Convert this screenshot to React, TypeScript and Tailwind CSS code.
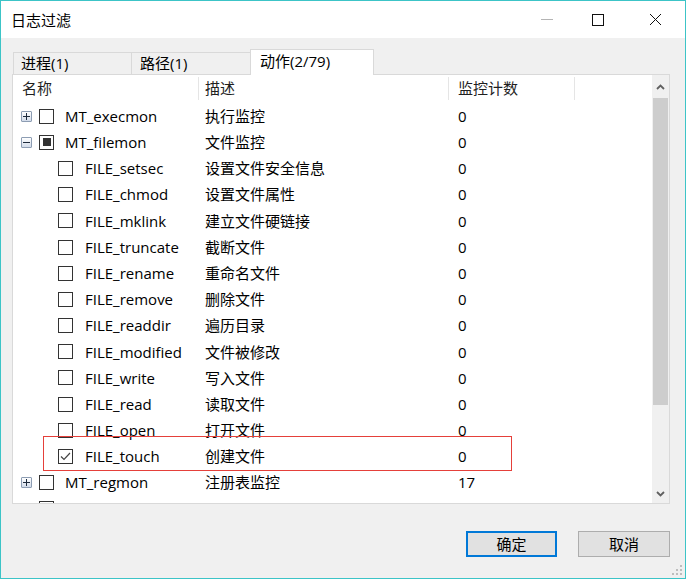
import React from 'react'

type Row = {
  level: 0 | 1
  open?: boolean
  check: 'none' | 'part' | 'on'
  name: string
  desc: string
  count: string
}

const rows: Row[] = [
  { level: 0, open: false, check: 'none', name: 'MT_execmon', desc: '执行监控', count: '0' },
  { level: 0, open: true, check: 'part', name: 'MT_filemon', desc: '文件监控', count: '0' },
  { level: 1, check: 'none', name: 'FILE_setsec', desc: '设置文件安全信息', count: '0' },
  { level: 1, check: 'none', name: 'FILE_chmod', desc: '设置文件属性', count: '0' },
  { level: 1, check: 'none', name: 'FILE_mklink', desc: '建立文件硬链接', count: '0' },
  { level: 1, check: 'none', name: 'FILE_truncate', desc: '截断文件', count: '0' },
  { level: 1, check: 'none', name: 'FILE_rename', desc: '重命名文件', count: '0' },
  { level: 1, check: 'none', name: 'FILE_remove', desc: '删除文件', count: '0' },
  { level: 1, check: 'none', name: 'FILE_readdir', desc: '遍历目录', count: '0' },
  { level: 1, check: 'none', name: 'FILE_modified', desc: '文件被修改', count: '0' },
  { level: 1, check: 'none', name: 'FILE_write', desc: '写入文件', count: '0' },
  { level: 1, check: 'none', name: 'FILE_read', desc: '读取文件', count: '0' },
  { level: 1, check: 'none', name: 'FILE_open', desc: '打开文件', count: '0' },
  { level: 1, check: 'on', name: 'FILE_touch', desc: '创建文件', count: '0' },
  { level: 0, open: false, check: 'none', name: 'MT_regmon', desc: '注册表监控', count: '17' },
  // next row is scrolled past the bottom edge, only its glyph tops show
  { level: 0, open: false, check: 'none', name: '', desc: '', count: '' },
]

function Expander({ open }: { open: boolean }) {
  return (
    <div className="w-[11px] h-[11px] rounded-[1px] border border-[#8d9db3] bg-linear-to-b from-[#ffffff] to-[#d3dcea] flex items-center justify-center">
      <svg width="7" height="7" viewBox="0 0 7 7">
        <rect x="0" y="3" width="7" height="1" fill="#1e2b3c" />
        {!open && <rect x="3" y="0" width="1" height="7" fill="#1e2b3c" />}
      </svg>
    </div>
  )
}

function Check({ state }: { state: Row['check'] }) {
  return (
    <div className="w-[15px] h-[15px] border border-[#333333] bg-white flex items-center justify-center shrink-0">
      {state === 'part' && <div className="w-[8px] h-[8px] bg-[#333333]" />}
      {state === 'on' && (
        <svg width="11" height="9" viewBox="0 0 11 9">
          <path d="M1 4.5 L4 7.5 L10 1" fill="none" stroke="#444" strokeWidth="1.2" />
        </svg>
      )}
    </div>
  )
}

function Chevron({ up }: { up: boolean }) {
  return (
    <svg width="9" height="6" viewBox="0 0 9 6">
      <path d={up ? 'M1 5 L4.5 1.5 L8 5' : 'M1 1 L4.5 4.5 L8 1'} fill="none" stroke="#606060" strokeWidth="1.8" />
    </svg>
  )
}

export default function App() {
  return (
    <div className="w-[686px] h-[579px] border border-[#3cc4c7] bg-[#f0f0f0] flex flex-col overflow-hidden text-[15px] text-black font-['Open_Sans','Noto_Sans_CJK_SC',sans-serif]">
      {/* Title bar */}
      <div className="h-[37px] bg-white flex items-center pl-[10px] shrink-0">
        <span className="font-['Noto_Sans_CJK_SC',sans-serif] leading-none">日志过滤</span>
        <div className="flex-1" />
        <div className="w-[46px] h-full flex items-center justify-center">
          <div className="w-[12px] h-px bg-[#b4b4b4]" />
        </div>
        <div className="w-[46px] h-full ml-[5px] flex items-center justify-center">
          <div className="w-[12px] h-[12px] border border-[#111]" />
        </div>
        <div className="w-[46px] h-full ml-[11px] mr-[7px] flex items-center justify-center">
          <svg width="13" height="13" viewBox="0 0 13 13">
            <path d="M1 1 L12 12 M12 1 L1 12" stroke="#111" strokeWidth="1" />
          </svg>
        </div>
      </div>

      {/* Body */}
      <div className="flex-1 flex flex-col pt-[10px] pl-[11px] pr-[15px]">
        {/* Tabs */}
        <div className="flex items-end h-[27px] -mb-px relative z-10 pl-[1px]">
          <div className="w-[118px] h-[22px] mb-px border-t border-l border-[#d9d9d9] bg-[#f0f0f0] pl-[7px] flex items-center">
            进程(1)
          </div>
          <div className="w-[120px] h-[22px] mb-px border-t border-l border-r border-[#d9d9d9] bg-[#f0f0f0] pl-[8px] flex items-center">
            路径(1)
          </div>
          <div className="w-[124px] h-[26px] border-t border-l border-r border-[#d9d9d9] bg-white pl-[9px] flex items-center -ml-px pb-[2px]">
            动作(2/79)
          </div>
        </div>

        {/* List panel */}
        <div className="h-[430px] border border-[#d9d9d9] bg-white flex overflow-hidden">
          <div className="flex-1 relative overflow-hidden">
            {/* Header */}
            <div className="h-[25px] flex text-[#1f1f1f]">
              <div className="w-[186px] border-r border-[#e5e5e5] pl-[9px] flex items-center mt-[2px]">名称</div>
              <div className="w-[250px] border-r border-[#e5e5e5] pl-[6px] flex items-center mt-[2px]">描述</div>
              <div className="w-[126px] border-r border-[#e5e5e5] pl-[9px] flex items-center mt-[2px]">监控计数</div>
            </div>
            <div className="pt-[3px]">
              {rows.map((r, i) => (
                <div key={i} className="h-[26.2px] flex items-center">
                  <div className="w-[186px] flex items-center">
                    {r.level === 0 ? (
                      <div className="flex items-center pl-[8px]">
                        <Expander open={!!r.open} />
                        <div className="ml-[7px]">
                          <Check state={r.check} />
                        </div>
                        {r.name && <span className="ml-[11px] whitespace-nowrap">{r.name}</span>}
                      </div>
                    ) : (
                      <div className="flex items-center pl-[45px]">
                        <Check state={r.check} />
                        <span className="ml-[12px] whitespace-nowrap">{r.name}</span>
                      </div>
                    )}
                  </div>
                  <div className="w-[250px] pl-[6px] font-['Noto_Sans_CJK_SC',sans-serif] whitespace-nowrap">{r.desc}</div>
                  <div className="w-[126px] pl-[9px]">{r.count}</div>
                </div>
              ))}
            </div>
            {/* highlight annotation */}
            <div className="absolute left-[30px] top-[361px] w-[469px] h-[35px] border border-[#e5403a]" />
          </div>

          {/* Scrollbar */}
          <div className="w-[17px] bg-[#f0f0f0] flex flex-col">
            <div className="h-[23px] flex items-center justify-center">
              <Chevron up />
            </div>
            <div className="h-[307px] mx-px bg-[#cdcdcd]" />
            <div className="flex-1" />
            <div className="h-[17px] flex items-center justify-center mb-[1px]">
              <Chevron up={false} />
            </div>
          </div>
        </div>

        {/* Buttons */}
        <div className="flex justify-end gap-[21px] mt-[27px]">
          <button className="w-[91px] h-[26px] border-2 border-[#0078d7] bg-[#e1e1e1] flex items-center justify-center font-['Noto_Sans_CJK_SC',sans-serif]">
            确定
          </button>
          <button className="w-[92px] h-[26px] border border-[#adadad] bg-[#e1e1e1] flex items-center justify-center font-['Noto_Sans_CJK_SC',sans-serif]">
            取消
          </button>
        </div>

        {/* Size grip */}
        <div className="flex-1 flex items-end justify-end -mr-[13px] pb-[2px]">
          <svg width="11" height="11" viewBox="0 0 11 11">
            <rect x="8" y="0" width="2" height="2" fill="#bdbdbd" />
            <rect x="4" y="4" width="2" height="2" fill="#bdbdbd" />
            <rect x="8" y="4" width="2" height="2" fill="#bdbdbd" />
            <rect x="0" y="8" width="2" height="2" fill="#bdbdbd" />
            <rect x="4" y="8" width="2" height="2" fill="#bdbdbd" />
            <rect x="8" y="8" width="2" height="2" fill="#bdbdbd" />
          </svg>
        </div>
      </div>
    </div>
  )
}
